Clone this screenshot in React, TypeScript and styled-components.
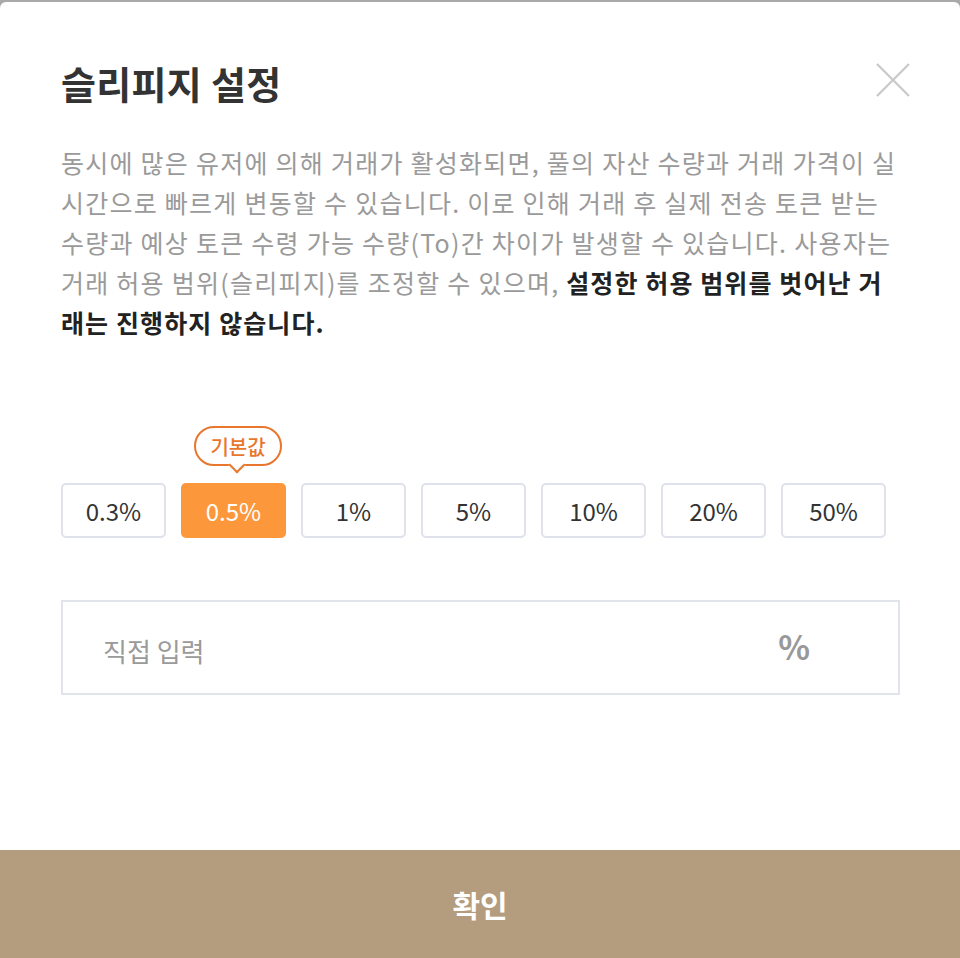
import React from "react";
import styled, { createGlobalStyle } from "styled-components";

const GlobalStyle = createGlobalStyle`
  html, body {
    margin: 0;
    padding: 0;
    background: #a9a9a9;
  }
  body {
    font-family: "Noto Sans CJK KR", "Noto Sans", sans-serif;
  }
  * { box-sizing: border-box; }
`;

const Card = styled.div`
  margin-top: 2px;
  width: 960px;
  height: 956px;
  background: #fff;
  border-radius: 6px 6px 0 0;
  display: flex;
  flex-direction: column;
  overflow: hidden;
`;

const Content = styled.div`
  flex: 1;
  padding: 61px 60px 0 61px;
  display: flex;
  flex-direction: column;
`;

const Header = styled.div`
  display: flex;
  align-items: center;
  justify-content: space-between;
  height: 40px;
`;

const Title = styled.h1`
  margin: 0;
  font-size: 38px;
  line-height: 40px;
  font-weight: 700;
  color: #333;
  letter-spacing: 0.3px;
`;

const CloseButton = styled.button`
  width: 34px;
  height: 34px;
  margin-right: -10px;
  margin-top: -7px;
  padding: 0;
  border: none;
  background: transparent;
  display: flex;
  align-items: center;
  justify-content: center;
  cursor: pointer;
`;

const Description = styled.p`
  margin: 39px 0 0 0;
  font-size: 25px;
  line-height: 40px;
  color: #9a9a9a;
  letter-spacing: 1.25px;
  white-space: nowrap;
`;

const Strong = styled.strong`
  font-weight: 700;
  color: #222;
  letter-spacing: 1.1px;
`;

const Options = styled.div`
  margin-top: 141px;
  display: flex;
  gap: 15px;
`;

const OptionWrap = styled.div`
  position: relative;
`;

const OptionButton = styled.button<{ $active?: boolean }>`
  width: 105px;
  height: 55px;
  border-radius: 5px;
  border: 2px solid ${(p) => (p.$active ? "#fd973b" : "#dfe2ea")};
  background: ${(p) => (p.$active ? "#fd973b" : "#fff")};
  color: ${(p) => (p.$active ? "#fff" : "#333")};
  font-family: "Noto Sans CJK KR", "Noto Sans", sans-serif;
  font-size: 24px;
  font-weight: 400;
  padding: 0;
  cursor: pointer;
`;

const Badge = styled.div`
  position: absolute;
  left: 13px;
  bottom: 72px;
  width: 88px;
  height: 40px;
  border: 2px solid #e8772d;
  border-radius: 20px;
  background: #fff;
  color: #e8772d;
  font-size: 20px;
  font-weight: 500;
  display: flex;
  align-items: center;
  justify-content: center;

  &::after {
    content: "";
    position: absolute;
    left: 35px;
    bottom: -7px;
    width: 10px;
    height: 10px;
    background: #fff;
    border-right: 2px solid #e8772d;
    border-bottom: 2px solid #e8772d;
    transform: rotate(45deg);
  }
`;

const InputBox = styled.label`
  margin-top: 62px;
  height: 95px;
  border: 2px solid #e2e4ec;
  display: flex;
  align-items: center;
  padding: 0 88px 0 40px;
`;

const Input = styled.input`
  flex: 1;
  border: none;
  outline: none;
  background: transparent;
  font-family: "Noto Sans CJK KR", "Noto Sans", sans-serif;
  font-size: 26px;
  color: #333;
  padding: 0;
  margin-top: 6px;
  &::placeholder {
    color: #9a9a9a;
  }
`;

const Percent = styled.span`
  font-size: 33px;
  font-weight: 700;
  color: #999;
  margin-top: -4px;
`;

const Footer = styled.button`
  height: 108px;
  width: 100%;
  border: none;
  background: #b49c7e;
  color: #fff;
  font-family: "Noto Sans CJK KR", "Noto Sans", sans-serif;
  font-size: 30px;
  font-weight: 700;
  cursor: pointer;
  padding: 0;
`;

const options = ["0.3%", "0.5%", "1%", "5%", "10%", "20%", "50%"];

export default function App() {
  return (
    <>
      <GlobalStyle />
      <Card>
        <Content>
          <Header>
            <Title>슬리피지 설정</Title>
            <CloseButton aria-label="닫기">
              <svg width="34" height="34" viewBox="0 0 34 34">
                <path
                  d="M1 1 L33 33 M33 1 L1 33"
                  stroke="#c8c8c8"
                  strokeWidth="2.2"
                  fill="none"
                />
              </svg>
            </CloseButton>
          </Header>
          <Description>
            동시에 많은 유저에 의해 거래가 활성화되면, 풀의 자산 수량과 거래 가격이 실
            <br />
            시간으로 빠르게 변동할 수 있습니다. 이로 인해 거래 후 실제 전송 토큰 받는
            <br />
            수량과 예상 토큰 수령 가능 수량(To)간 차이가 발생할 수 있습니다. 사용자는
            <br />
            거래 허용 범위(슬리피지)를 조정할 수 있으며, <Strong>설정한 허용 범위를 벗어난 거</Strong>
            <br />
            <Strong>래는 진행하지 않습니다.</Strong>
          </Description>
          <Options>
            {options.map((o) => (
              <OptionWrap key={o}>
                {o === "0.5%" && <Badge>기본값</Badge>}
                <OptionButton $active={o === "0.5%"}>{o}</OptionButton>
              </OptionWrap>
            ))}
          </Options>
          <InputBox>
            <Input placeholder="직접 입력" />
            <Percent>%</Percent>
          </InputBox>
        </Content>
        <Footer>확인</Footer>
      </Card>
    </>
  );
}
